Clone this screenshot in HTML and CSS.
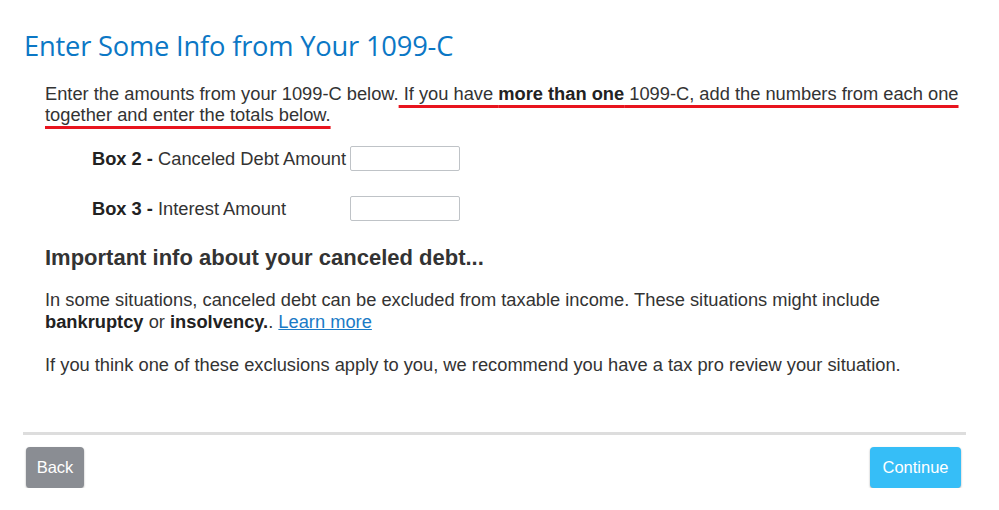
FILE: index.html
```html
<!DOCTYPE html>
<html>
<head>
<meta charset="utf-8">
<link rel="stylesheet" href="styles.css">
</head>
<body>
<div class="page">
  <h1 class="title">Enter Some Info from Your 1099-C</h1>
  <div class="content">
    <p class="intro">Enter the amounts from your 1099-C below.<span class="mark"> If you have <b>more than one</b> 1099-C, add the numbers from each one together and enter the totals below.</span></p>
    <div class="fields">
      <div class="field"><label class="lbl"><b>Box 2 -</b> Canceled Debt Amount</label><input class="box" type="text"></div>
      <div class="field"><label class="lbl"><b>Box 3 -</b> Interest Amount</label><input class="box" type="text"></div>
    </div>
    <h2 class="sub">Important info about your canceled debt...</h2>
    <p class="para">In some situations, canceled debt can be excluded from taxable income. These situations might include <b>bankruptcy</b> or <b>insolvency.</b>. <a class="link" href="#">Learn more</a></p>
    <p class="para">If you think one of these exclusions apply to you, we recommend you have a tax pro review your situation.</p>
  </div>
  <div class="rule"></div>
  <div class="actions">
    <button class="btn back">Back</button>
    <button class="btn cont">Continue</button>
  </div>
</div>
</body>
</html>
```
FILE: styles.css
```css
html, body { margin: 0; padding: 0; background: #fff; }
body { font-family: "Liberation Sans", Arial, sans-serif; color: #333; }
.page { width: 943px; padding: 29px 0 0 23px; }
.title { margin: 0 0 0 1px; font-family: "Open Sans", sans-serif; font-weight: 400; font-size: 27.3px; line-height: 34px; color: #0b77c5; letter-spacing: -0.2px; }
.content { padding: 0 0 0 22px; }
.intro { margin: 20px 0 0; font-size: 18.3px; line-height: 21px; }
.intro b, .para b { color: #222; }
.mark { text-decoration: underline; text-decoration-color: #e8141e; text-decoration-thickness: 3px; text-underline-offset: 5px; text-decoration-skip-ink: none; }
.fields { padding-left: 47px; margin-top: 21px; display: flex; flex-direction: column; gap: 25px; }
.field { display: flex; align-items: center; height: 25px; }
.lbl { width: 258px; font-size: 18.3px; }
.lbl b { color: #222; }
.box { width: 110px; height: 25px; box-sizing: border-box; border: 1px solid #bfc3c7; border-radius: 2px; margin: 0; padding: 0 4px; }
.sub { margin: 23px 0 0; font-size: 22px; line-height: 28px; font-weight: 700; color: #333; }
.para { margin: 17px 0 0; font-size: 18.3px; line-height: 22px; }
.para + .para { margin-top: 21px; }
.link { color: #1a7ac6; }
.rule { margin-top: 56px; height: 3px; background: #dddddd; }
.actions { display: flex; justify-content: space-between; padding: 12px 5px 0 3px; }
.btn { border: none; border-radius: 4px; font-family: "Liberation Sans", Arial, sans-serif; font-size: 16.5px; color: #fff; height: 41px; padding: 0; box-shadow: 0 1px 2px rgba(0,0,0,0.35); }
.back { background: #8a8d93; width: 58px; }
.cont { background: #36bef7; width: 91px; }
```
